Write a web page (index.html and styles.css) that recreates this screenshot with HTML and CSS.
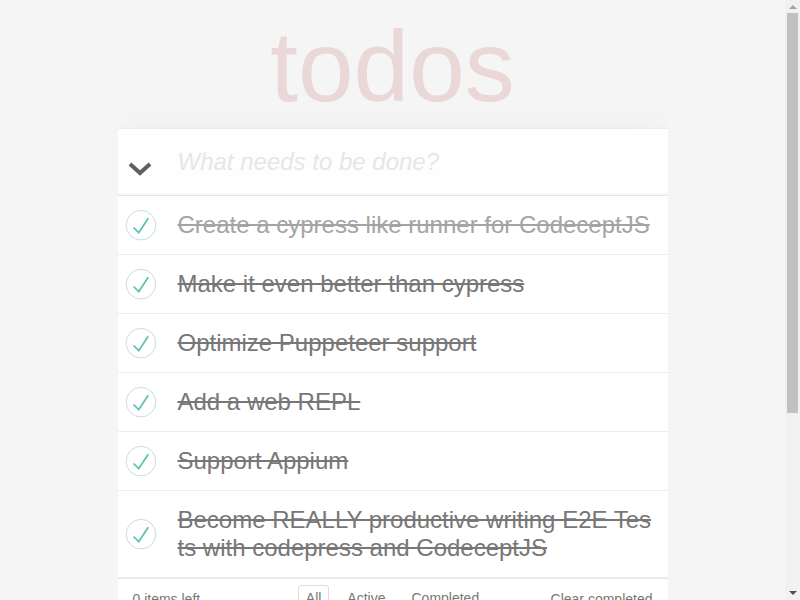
FILE: index.html
```html
<!DOCTYPE html>
<html>
<head>
<meta charset="utf-8">
<title>TodoMVC</title>
<link rel="stylesheet" href="styles.css">
</head>
<body>
<h1 class="title">todos</h1>
<section class="todoapp">
  <header class="header">
    <div class="new-row">
      <span class="toggle-all">
        <svg width="24" height="14" viewBox="0 0 24 14"><polyline points="2,2 12,11 22,2" fill="none" stroke="#5f5f5f" stroke-width="4"/></svg>
      </span>
      <input class="new-todo" placeholder="What needs to be done?">
    </div>
  </header>
  <section class="main">
    <ul class="todo-list">
      <li class="item first"><span class="toggle"><svg width="40" height="40" viewBox="-10 -18 100 135"><circle cx="50" cy="50" r="50" fill="none" stroke="#bddad5" stroke-width="3"/><path fill="#5dc2af" d="M72 25L42 71 27 56l-4 4 20 20 34-52z"/></svg></span><label class="text">Create a cypress like runner for CodeceptJS</label></li>
      <li class="item"><span class="toggle"><svg width="40" height="40" viewBox="-10 -18 100 135"><circle cx="50" cy="50" r="50" fill="none" stroke="#bddad5" stroke-width="3"/><path fill="#5dc2af" d="M72 25L42 71 27 56l-4 4 20 20 34-52z"/></svg></span><label class="text">Make it even better than cypress</label></li>
      <li class="item"><span class="toggle"><svg width="40" height="40" viewBox="-10 -18 100 135"><circle cx="50" cy="50" r="50" fill="none" stroke="#bddad5" stroke-width="3"/><path fill="#5dc2af" d="M72 25L42 71 27 56l-4 4 20 20 34-52z"/></svg></span><label class="text">Optimize Puppeteer support</label></li>
      <li class="item"><span class="toggle"><svg width="40" height="40" viewBox="-10 -18 100 135"><circle cx="50" cy="50" r="50" fill="none" stroke="#bddad5" stroke-width="3"/><path fill="#5dc2af" d="M72 25L42 71 27 56l-4 4 20 20 34-52z"/></svg></span><label class="text">Add a web REPL</label></li>
      <li class="item"><span class="toggle"><svg width="40" height="40" viewBox="-10 -18 100 135"><circle cx="50" cy="50" r="50" fill="none" stroke="#bddad5" stroke-width="3"/><path fill="#5dc2af" d="M72 25L42 71 27 56l-4 4 20 20 34-52z"/></svg></span><label class="text">Support Appium</label></li>
      <li class="item"><span class="toggle"><svg width="40" height="40" viewBox="-10 -18 100 135"><circle cx="50" cy="50" r="50" fill="none" stroke="#bddad5" stroke-width="3"/><path fill="#5dc2af" d="M72 25L42 71 27 56l-4 4 20 20 34-52z"/></svg></span><label class="text">Become REALLY productive writing E2E Tests with codepress and CodeceptJS</label></li>
    </ul>
  </section>
  <footer class="footer">
    <span class="count">0 items left</span>
    <ul class="filters">
      <li><a class="filter selected">All</a></li>
      <li><a class="filter">Active</a></li>
      <li><a class="filter">Completed</a></li>
    </ul>
    <span class="clear">Clear completed</span>
  </footer>
</section>
<footer class="info">
  <p>Double-click to edit a todo</p>
  <p>Part of TodoMVC</p>
</footer>
<div class="scrollbar">
  <span class="arrow-up"></span>
  <span class="thumb"></span>
  <span class="arrow-down"></span>
</div>
</body>
</html>
```
FILE: styles.css
```css
html { margin: 0; padding: 0 15px 0 0; overflow: hidden; background: #f5f5f5; }
body {
  font: 14px "Liberation Sans", Arial, sans-serif;
  line-height: 1.4em;
  background: #f5f5f5;
  color: #4d4d4d;
  min-width: 230px;
  max-width: 550px;
  margin: 0 auto;
  padding: 16px 0 0 0;
}
.title {
  margin: 0 0 13px 0;
  height: 100px;
  font-size: 100px;
  line-height: 100px;
  font-weight: 400;
  text-align: center;
  color: rgba(175,47,47,0.15);
}
.todoapp {
  background: #fff;
  box-shadow: 0 2px 4px 0 rgba(0,0,0,0.2), 0 25px 50px 0 rgba(0,0,0,0.1);
  margin: 0 0 40px 0;
}
.header { display: block; }
.new-row {
  display: flex;
  align-items: center;
  background: rgba(0,0,0,0.003);
  box-shadow: inset 0 -2px 1px rgba(0,0,0,0.03);
}
.toggle-all {
  width: 60px;
  flex: none;
  display: flex;
  justify-content: center;
  padding-top: 14px;
  box-sizing: border-box;
  margin-left: -8px;
  margin-right: 8px;
}
.toggle-all svg { display: block; }
.new-todo {
  flex: 1;
  min-width: 0;
  border: none;
  outline: none;
  background: transparent;
  padding: 16px 16px 16px 0;
  font-family: "Liberation Sans", Arial, sans-serif;
  font-size: 24px;
  line-height: 1.4em;
  height: 65.6px;
  box-sizing: border-box;
  color: #4d4d4d;
}
.new-todo::placeholder { font-style: italic; color: #e6e6e6; }
.main { border-top: 1px solid #e6e6e6; }
.todo-list { list-style: none; margin: 0; padding: 0; }
.item {
  display: flex;
  align-items: center;
  border-bottom: 1px solid #ededed;
  font-size: 24px;
}
.toggle { width: 40px; height: 40px; flex: none; }
.toggle svg { display: block; }
.text {
  flex: 1;
  min-width: 0;
  padding: 15px 15px 15px 20px;
  line-height: 28px;
  word-break: break-all;
  color: #777;
  text-decoration: line-through;
}
.first .text { color: #a4a4a4; }
.footer {
  display: grid;
  grid-template-columns: 1fr auto 1fr;
  grid-template-rows: 20px;
  align-items: start;
  color: #777;
  padding: 10px 15px;
  height: 20px;
  border-top: 1px solid #e6e6e6;
}
.count { line-height: 20px; }
.filters {
  display: flex;
  align-items: center;
  height: 20px;
  gap: 4px;
  list-style: none;
  margin: 0;
  padding: 0;
}
.filter {
  display: block;
  margin: 3px;
  padding: 3px 7px;
  border: 1px solid transparent;
  border-radius: 3px;
  line-height: 1.4em;
  color: inherit;
}
.filter.selected { border-color: rgba(175,47,47,0.2); }
.clear { justify-self: end; line-height: 20px; }
.info {
  margin: 65px auto 0;
  padding-bottom: 20px;
  color: #bfbfbf;
  font-size: 10px;
  text-align: center;
}
.scrollbar {
  position: fixed;
  top: 0;
  right: 0;
  width: 15px;
  height: 100vh;
  background: #f1f1f1;
}
.thumb {
  position: absolute;
  top: 13px;
  left: 2px;
  width: 11px;
  height: 400px;
  background: #c1c1c1;
}
.arrow-up {
  position: absolute;
  top: 5px;
  left: 4px;
  border-left: 4px solid transparent;
  border-right: 4px solid transparent;
  border-bottom: 4px solid #a3a3a3;
}
.arrow-down {
  position: absolute;
  bottom: 5px;
  left: 4px;
  border-left: 4px solid transparent;
  border-right: 4px solid transparent;
  border-top: 4px solid #505050;
}
```
